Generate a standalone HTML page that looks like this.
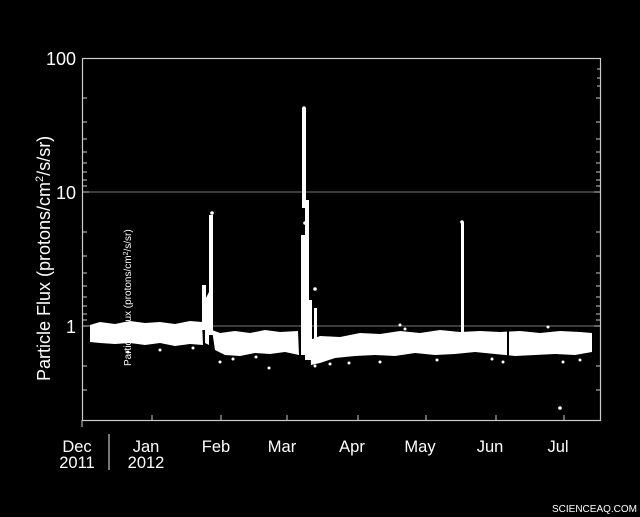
<!DOCTYPE html>
<html><head><style>
html,body{margin:0;padding:0;background:#000;width:640px;height:517px;overflow:hidden}
svg{display:block}
text{font-family:"Liberation Sans",sans-serif;fill:#fff}
</style></head><body>
<svg width="640" height="517" viewBox="0 0 640 517">
<rect width="640" height="517" fill="#000"/>
<line x1="83" y1="192" x2="600" y2="192" stroke="#777" stroke-width="1"/>
<line x1="83" y1="326" x2="600" y2="326" stroke="#777" stroke-width="1"/>
<rect x="82.5" y="58.5" width="518" height="362" fill="none" stroke="#ccc" stroke-width="1.2"/>
<g stroke="#ccc" stroke-width="1">
<path d="M83 98h4M83 122h4M83 139h4M83 152h4M83 163h4M83 172h4M83 180h4M83 186h4M83 192h6
M83 232h4M83 256h4M83 273h4M83 286h4M83 297h4M83 306h4M83 314h4M83 320h4M83 326h6
M83 366h4M83 390h4"/>
<path d="M600 98h-4M600 122h-4M600 139h-4M600 152h-4M600 163h-4M600 172h-4M600 180h-4M600 186h-4M600 192h-6
M600 232h-4M600 256h-4M600 273h-4M600 286h-4M600 297h-4M600 306h-4M600 314h-4M600 320h-4M600 326h-6
M600 366h-4M600 390h-4M600 69h-3M600 78h-3M600 86h-3"/>
<path d="M152 420v-5M221 420v-5M287 420v-5M358 420v-5M426 420v-5M496 420v-5M564 420v-5M82 420v7"/>
<line x1="109" y1="434" x2="109" y2="470" stroke="#777" stroke-width="2"/>
</g>
<g font-size="18" text-anchor="end">
<text x="76" y="65">100</text>
<text x="76" y="199">10</text>
<text x="76" y="333">1</text>
</g>
<text transform="translate(50,381) rotate(-90)" font-size="18">Particle Flux (protons/cm<tspan font-size="11" dy="-7">2</tspan><tspan dy="7">/s/sr)</tspan></text>
<text transform="translate(131,366) rotate(-90)" font-size="10" fill="#ddd">Particle Flux (protons/cm<tspan font-size="7" dy="-3">2</tspan><tspan dy="3">/s/sr)</tspan></text>
<g font-size="16.5" text-anchor="middle">
<text x="77" y="452">Dec</text><text x="77" y="468">2011</text>
<text x="146" y="452">Jan</text><text x="146" y="468">2012</text>
<text x="216" y="452">Feb</text>
<text x="282" y="452">Mar</text>
<text x="352" y="452">Apr</text>
<text x="420" y="452">May</text>
<text x="490" y="452">Jun</text>
<text x="558" y="452">Jul</text>
</g>
<text x="637" y="512" font-size="10" text-anchor="end" fill="#ccc">SCIENCEAQ.COM</text>
<g fill="#fff">
<polygon points="90,325 100,322 115,324 130,321 145,323 160,322 175,324 190,321 202,322 203,345 190,344 175,346 160,343 145,345 130,343 115,344 100,343 90,342"/>
<polygon points="205,300 209,292 209,345 205,343"/>
<rect x="202" y="285" width="4" height="45"/>
<rect x="209" y="215" width="4" height="120"/>
<polygon points="212,330 220,333 235,331 250,333 265,330 280,332 298,331 299,355 285,352 270,354 255,353 240,356 225,355 215,350"/>
<rect x="301" y="235" width="4" height="120"/>
<rect x="302" y="108" width="4" height="100"/>
<rect x="305" y="200" width="4" height="160"/>
<rect x="309" y="300" width="3" height="60"/>
<rect x="314" y="308" width="3" height="45"/>
<polygon points="310,340 320,336 340,337 360,333 380,334 400,331 420,333 440,330 460,332 480,331 500,332 520,331 540,333 560,331 580,332 592,333 592,352 575,355 555,354 535,355 515,356 495,354 475,352 455,354 435,355 415,353 395,356 375,355 355,356 335,358 320,363 311,365"/>
<rect x="461" y="222" width="3" height="110"/>
<rect x="507" y="330" width="2" height="28" fill="#000"/>
<g>
<circle cx="212" cy="213" r="1.8"/><circle cx="304" cy="108" r="1.8"/><circle cx="304" cy="114" r="1.8"/>
<circle cx="462" cy="222" r="1.8"/><circle cx="315" cy="289" r="1.8"/><circle cx="305" cy="223" r="1.8"/>
<circle cx="560" cy="408" r="1.8"/><circle cx="220" cy="362" r="1.5"/><circle cx="269" cy="368" r="1.5"/>
<circle cx="160" cy="350" r="1.5"/><circle cx="193" cy="348" r="1.5"/><circle cx="233" cy="359" r="1.5"/>
<circle cx="315" cy="366" r="1.5"/><circle cx="349" cy="363" r="1.5"/><circle cx="380" cy="362" r="1.5"/>
<circle cx="400" cy="325" r="1.5"/><circle cx="405" cy="329" r="1.5"/><circle cx="548" cy="327" r="1.5"/>
<circle cx="563" cy="362" r="1.5"/><circle cx="580" cy="360" r="1.5"/><circle cx="503" cy="362" r="1.5"/>
<circle cx="492" cy="359" r="1.5"/><circle cx="437" cy="360" r="1.5"/><circle cx="128" cy="352" r="1.5"/>
<circle cx="110" cy="330" r="1.5"/><circle cx="330" cy="364" r="1.5"/><circle cx="256" cy="357" r="1.5"/>
</g>
</g>
</svg>
</body></html>
